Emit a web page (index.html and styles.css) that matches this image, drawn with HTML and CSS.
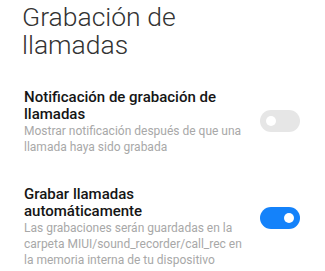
FILE: index.html
```html
<!DOCTYPE html>
<html lang="es">
<head>
<meta charset="utf-8">
<link rel="stylesheet" href="styles.css">
</head>
<body>
<h1 class="page-title">Grabación de llamadas</h1>
<div class="setting first">
  <div class="setting-text">
    <div class="setting-title">Notificación de grabación de llamadas</div>
    <div class="setting-desc">Mostrar notificación después de que una llamada haya sido grabada</div>
  </div>
  <div class="toggle off"><span class="knob"></span></div>
</div>
<div class="setting second">
  <div class="setting-text">
    <div class="setting-title">Grabar llamadas automáticamente</div>
    <div class="setting-desc">Las grabaciones serán guardadas en la carpeta MIUI/sound_recorder/call_rec en la memoria interna de tu dispositivo</div>
  </div>
  <div class="toggle on"><span class="knob"></span></div>
</div>
</body>
</html>
```
FILE: styles.css
```css
html, body {
  margin: 0;
  padding: 0;
  background: #ffffff;
}
body {
  font-family: Roboto, "Noto Sans", sans-serif;
  width: 325px;
  height: 271px;
  overflow: hidden;
}
.page-title {
  margin: 3px 0 0 0;
  padding-left: 22px;
  font-size: 26.5px;
  line-height: 28px;
  font-weight: 300;
  color: #333333;
  width: 200px;
}
.setting {
  display: flex;
  align-items: flex-start;
  padding: 0 25px 0 24px;
}
.setting.first {
  margin-top: 30px;
}
.setting.second {
  margin-top: 31px;
}
.setting-text {
  width: 222px;
}
.setting-title {
  font-size: 15px;
  line-height: 17px;
  font-weight: 500;
  color: #151515;
}
.setting-desc {
  font-size: 12px;
  line-height: 16px;
  color: #a8a8a8;
}
.toggle {
  margin-left: auto;
  margin-top: 21px;
  width: 40px;
  height: 22px;
  border-radius: 11px;
  display: flex;
  align-items: center;
  padding: 0 6px;
  box-sizing: border-box;
}
.toggle.off {
  background: #e6e6e6;
  justify-content: flex-start;
}
.toggle.on {
  background: #1482fa;
  justify-content: flex-end;
}
.knob {
  width: 10px;
  height: 10px;
  border-radius: 50%;
  background: #ffffff;
}
```
